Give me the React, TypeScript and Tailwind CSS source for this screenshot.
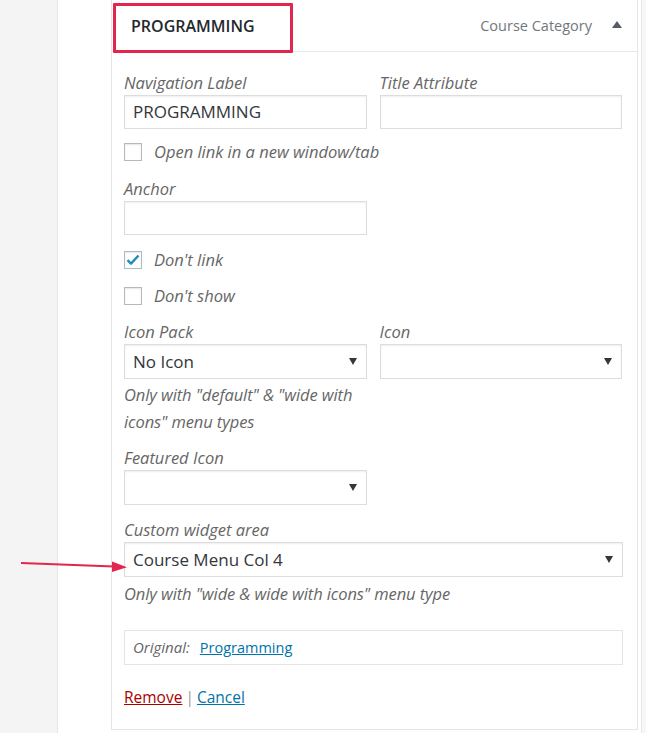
import React from "react";

const font = { fontFamily: '"Open Sans", "Noto Sans", Arial, sans-serif' };

function Label({ children }: { children: React.ReactNode }) {
  return <div className="text-[16.5px] leading-[20px] italic text-[#666]">{children}</div>;
}

function TextInput({ value, className = "" }: { value?: string; className?: string }) {
  return (
    <div
      className={`h-[34px] border border-[#ddd] bg-white shadow-[inset_0_1px_2px_rgba(0,0,0,0.07)] flex items-center px-[8px] text-[17px] text-[#32373c] ${className}`}
    >
      {value}
    </div>
  );
}

function Select({ value, className = "" }: { value?: string; className?: string }) {
  return (
    <div
      className={`h-[35px] border border-[#ddd] bg-white shadow-[inset_0_1px_2px_rgba(0,0,0,0.07)] flex items-center justify-between pl-[8px] pr-[9px] text-[17px] text-[#32373c] ${className}`}
    >
      <span>{value}</span>
      <svg width="8" height="7" viewBox="0 0 8 7" className="shrink-0">
        <path d="M0 0 H8 L4 7 Z" fill="#32373c" />
      </svg>
    </div>
  );
}

function Checkbox({ checked, label }: { checked?: boolean; label: string }) {
  return (
    <div className="flex items-center h-[22px]">
      <div className="w-[18px] h-[18px] border border-[#b4b9be] bg-white shadow-[inset_0_1px_2px_rgba(0,0,0,0.1)] flex items-center justify-center">
        {checked && (
          <svg width="14" height="12" viewBox="0 0 14 12">
            <path d="M1.5 6.2 L5 9.6 L12.5 1.5" fill="none" stroke="#1e8cbe" strokeWidth="2.4" strokeLinejoin="round" />
          </svg>
        )}
      </div>
      <span className="ml-[12px] text-[16.5px] italic text-[#666]">{label}</span>
    </div>
  );
}

export default function App() {
  return (
    <div className="w-[646px] h-[733px] bg-white flex overflow-hidden relative" style={font}>
      {/* left admin gutter */}
      <div className="w-[58px] shrink-0 bg-[#f4f4f4] border-r border-[#e6e6e6]" />

      <div className="w-[53px] shrink-0" />

      {/* menu item settings panel */}
      <div className="w-[527px] shrink-0 h-[730px] border-l border-r border-b border-[#e5e5e5] bg-white flex flex-col">
        <div className="h-[52px] shrink-0 border-b border-[#e8e8e8] flex items-center pl-[19px] pr-[15px] relative">
          <span className="text-[16px] font-semibold text-[#23282d]">PROGRAMMING</span>
          <span className="ml-auto text-[14.5px] text-[#72777c]">Course Category</span>
          <svg width="10" height="7" viewBox="0 0 10 7" className="ml-[20px] mb-[3px]">
            <path d="M0 7 L5 0 L10 7 Z" fill="#555d66" />
          </svg>
          <div className="absolute left-[1px] top-[3px] w-[180px] h-[50px] border-[3px] border-[#e2264d] rounded-[1px]" />
        </div>

        <div className="pl-[12px] pr-[15px] pt-[21px] flex flex-col">
          <div className="flex gap-[13px]">
            <div className="w-[243px]">
              <Label>Navigation Label</Label>
              <TextInput value="PROGRAMMING" className="mt-[2px]" />
            </div>
            <div className="w-[243px]">
              <Label>Title Attribute</Label>
              <TextInput className="mt-[2px]" />
            </div>
          </div>

          <div className="mt-[12px]">
            <Checkbox label="Open link in a new window/tab" />
          </div>

          <div className="mt-[16px] w-[243px]">
            <Label>Anchor</Label>
            <TextInput className="mt-[2px]" />
          </div>

          <div className="mt-[14px]">
            <Checkbox checked label="Don't link" />
          </div>
          <div className="mt-[14px]">
            <Checkbox label="Don't show" />
          </div>

          <div className="mt-[15px] flex gap-[13px]">
            <div className="w-[243px]">
              <Label>Icon Pack</Label>
              <Select value="No Icon" className="mt-[2px]" />
              <div className="mt-[2px] text-[16.5px] leading-[27px] italic text-[#666] tracking-[-0.1px]">
                Only with "default" &amp; "wide with icons" menu types
              </div>
            </div>
            <div className="w-[243px]">
              <Label>Icon</Label>
              <Select className="mt-[2px]" />
            </div>
          </div>

          <div className="mt-[13px] w-[243px]">
            <Label>Featured Icon</Label>
            <Select className="mt-[2px]" />
          </div>

          <div className="mt-[15px]">
            <Label>Custom widget area</Label>
            <Select value="Course Menu Col 4" className="mt-[2px] w-[499px]" />
            <div className="mt-[3px] text-[16.5px] leading-[27px] italic text-[#666] tracking-[-0.1px]">
              Only with "wide &amp; wide with icons" menu type
            </div>
          </div>

          <div className="mt-[23px] w-[499px] h-[35px] border border-[#e5e5e5] flex items-center px-[8px]">
            <span className="text-[15px] italic text-[#666]">Original:</span>
            <a className="ml-[10px] text-[14.5px] text-[#0073aa] underline">Programming</a>
          </div>

          <div className="mt-[22px] text-[15.5px] leading-[20px] flex items-center">
            <a className="text-[#a00] underline">Remove</a>
            <span className="mx-[3px] text-[#999]">|</span>
            <a className="text-[#0073aa] underline">Cancel</a>
          </div>
        </div>
      </div>

      <div className="w-[3px] shrink-0" />
      <div className="flex-1 border-l border-[#e8e8e8] bg-[#f7f7f7]" />

      {/* pointer arrow */}
      <svg className="absolute left-[20px] top-[555px]" width="110" height="20" viewBox="0 0 110 20">
        <path d="M1 8 L94 11.6" stroke="#e2264d" strokeWidth="2" fill="none" />
        <path d="M92 6.5 L107 12.2 L92 17 Z" fill="#e2264d" />
      </svg>
    </div>
  );
}
